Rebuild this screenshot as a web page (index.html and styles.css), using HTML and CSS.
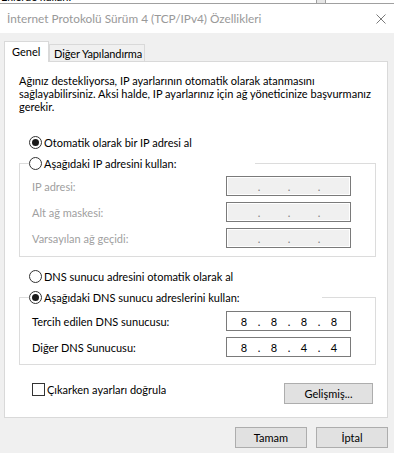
FILE: index.html
```html
<!DOCTYPE html>
<html lang="tr">
<head>
<meta charset="utf-8">
<title>İnternet Protokolü Sürüm 4 (TCP/IPv4) Özellikleri</title>
<link rel="stylesheet" href="styles.css">
</head>
<body>
<div class="behind"><span class="behind-text">Eklerde kullan:</span><span class="behind-scroll"></span></div>
<div class="window">
  <div class="titlebar">
    <span class="title">İnternet Protokolü Sürüm 4 (TCP/IPv4) Özellikleri</span>
    <svg class="close" viewBox="0 0 10 10" width="10" height="10"><path d="M0.5 0.5L9.5 9.5M9.5 0.5L0.5 9.5" stroke="#7a7a7a" stroke-width="1" fill="none"/></svg>
  </div>
  <div class="dialog-body">
    <div class="tabs">
      <div class="tab tab-active">Genel</div>
      <div class="tab">Diğer Yapılandırma</div>
    </div>
    <div class="panel">
      <p class="intro">Ağınız destekliyorsa, IP ayarlarının otomatik olarak atanmasını<br>sağlayabilirsiniz. Aksi halde, IP ayarlarınız için ağ yöneticinize başvurmanız<br>gerekir.</p>
      <div class="option option-ip-auto"><span class="radio radio-checked"></span><span>Otomatik olarak bir IP adresi al</span></div>
      <fieldset class="group">
        <legend class="group-legend legend-ip"><span class="option"><span class="radio"></span><span>Aşağıdaki IP adresini kullan:</span></span></legend>
        <div class="field-row disabled"><span>IP adresi:</span><div class="ip-field"><span class="oct"></span><span class="dot">.</span><span class="oct"></span><span class="dot">.</span><span class="oct"></span><span class="dot">.</span><span class="oct"></span></div></div>
        <div class="field-row disabled"><span>Alt ağ maskesi:</span><div class="ip-field"><span class="oct"></span><span class="dot">.</span><span class="oct"></span><span class="dot">.</span><span class="oct"></span><span class="dot">.</span><span class="oct"></span></div></div>
        <div class="field-row disabled"><span>Varsayılan ağ geçidi:</span><div class="ip-field"><span class="oct"></span><span class="dot">.</span><span class="oct"></span><span class="dot">.</span><span class="oct"></span><span class="dot">.</span><span class="oct"></span></div></div>
      </fieldset>
      <div class="option option-dns-auto"><span class="radio"></span><span>DNS sunucu adresini otomatik olarak al</span></div>
      <fieldset class="group group-dns">
        <legend class="group-legend legend-dns"><span class="option"><span class="radio radio-checked"></span><span>Aşağıdaki DNS sunucu adreslerini kullan:</span></span></legend>
        <div class="field-row"><span>Tercih edilen DNS sunucusu:</span><div class="ip-field"><span class="oct">8</span><span class="dot">.</span><span class="oct">8</span><span class="dot">.</span><span class="oct">8</span><span class="dot">.</span><span class="oct">8</span></div></div>
        <div class="field-row"><span>Diğer DNS Sunucusu:</span><div class="ip-field"><span class="oct">8</span><span class="dot">.</span><span class="oct">8</span><span class="dot">.</span><span class="oct">4</span><span class="dot">.</span><span class="oct">4</span></div></div>
      </fieldset>
      <div class="check-row">
        <label class="check"><span class="checkbox"></span><span>Çıkarken ayarları doğrula</span></label>
        <button class="btn btn-advanced" type="button">Gelişmiş...</button>
      </div>
    </div>
    <div class="dialog-buttons">
      <button class="btn btn-dialog" type="button">Tamam</button>
      <button class="btn btn-dialog" type="button">İptal</button>
    </div>
  </div>
</div>
</body>
</html>
```

FILE: styles.css
```css
* { box-sizing: border-box; }

body {
  margin: 0;
  width: 394px;
  height: 453px;
  overflow: hidden;
  background: #fff;
  color: #000;
  font-family: Lato, "Liberation Sans", sans-serif;
  font-size: 11px;
}

.behind {
  display: flex;
  height: 4px;
  overflow: hidden;
  border-bottom: 1px solid #a0a0a0;
}
.behind-text {
  line-height: 12px;
  margin-top: -9px;
  padding-left: 1px;
}
.behind-scroll {
  width: 10px;
  margin-left: auto;
  margin-right: 68px;
  background: #e6e6e6;
  border-left: 1px solid #a0a0a0;
  border-right: 1px solid #a0a0a0;
}

.titlebar {
  display: flex;
  align-items: center;
  height: 29px;
  padding: 0 8px 0 7px;
  background: #fff;
}
.title {
  color: #999;
  font-size: 11.8px;
  white-space: nowrap;
}
.close {
  margin-left: auto;
  display: block;
}

.dialog-body {
  height: 420px;
  padding-top: 8px;
  background: #f0f0f0;
}

.tabs {
  display: flex;
  align-items: flex-end;
  height: 20px;
  margin-left: 4px;
}
.tab {
  position: relative;
  height: 17px;
  width: 96px;
  padding: 1px 0 0 4px;
  border: 1px solid #d9d9d9;
  border-bottom: none;
  background: #f0f0f0;
  line-height: 15px;
  white-space: nowrap;
  letter-spacing: -0.1px;
}
.tab-active {
  z-index: 1;
  width: 45px;
  height: 21px;
  margin-bottom: -1px;
  padding: 2px 0 0 7px;
  background: #fff;
  letter-spacing: 0;
}

.panel {
  width: 384px;
  height: 357px;
  margin-left: 4px;
  padding: 12px 11px 0 14px;
  background: #fff;
  border: 1px solid #d9d9d9;
}

.intro {
  margin: 0;
  line-height: 13px;
  white-space: nowrap;
}

.option {
  display: flex;
  align-items: center;
  gap: 2px;
  height: 21px;
  white-space: nowrap;
}
.option-ip-auto {
  margin: 19px 0 0 10px;
}
.option-dns-auto {
  margin: 9px 0 0 10px;
}

.radio {
  flex: none;
  display: grid;
  place-items: center;
  width: 13px;
  height: 13px;
  border: 1px solid #333;
  border-radius: 50%;
  background: #fff;
}
.radio-checked::after {
  content: "";
  width: 7px;
  height: 7px;
  border-radius: 50%;
  background: #1a1a1a;
}

.group {
  width: 357px;
  margin: 0;
  padding: 2px 24px 8px 12px;
  border: 1px solid #dcdcdc;
}
.group-dns {
  padding-top: 3px;
  padding-bottom: 7px;
}
.group-legend {
  padding: 0;
  margin-left: -3px;
  height: 21px;
}
.legend-ip { width: 226px; }
.legend-dns { width: 293px; }

.field-row {
  display: flex;
  align-items: center;
  justify-content: space-between;
  height: 20px;
}
.field-row + .field-row {
  margin-top: 6px;
}
.disabled {
  color: #a0a0a0;
}

.ip-field {
  display: flex;
  align-items: center;
  width: 125px;
  height: 20px;
  padding-left: 4px;
  border: 1px solid #7a7a7a;
  background: #fff;
  color: #000;
}
.disabled .ip-field {
  background: #f0f0f0;
  box-shadow: inset 0 0 0 1px #fff;
  color: #808080;
}
.oct {
  width: 26px;
  text-align: center;
}
.dot {
  width: 4px;
  text-align: center;
}

.check-row {
  display: flex;
  align-items: flex-start;
  justify-content: space-between;
  width: 357px;
  margin-top: 18px;
}
.check {
  display: flex;
  align-items: center;
  gap: 2px;
  margin-left: 13px;
  line-height: 13px;
}
.checkbox {
  width: 13px;
  height: 13px;
  border: 1px solid #333;
  background: #fff;
}

.btn {
  height: 21px;
  padding: 0;
  font: inherit;
  color: #000;
  background: #e1e1e1;
  border: 1px solid #adadad;
}
.btn-advanced {
  width: 89px;
  margin-right: 3px;
}

.dialog-buttons {
  display: flex;
  justify-content: flex-end;
  gap: 9px;
  margin-top: 9px;
  padding-right: 6px;
}
.btn-dialog {
  width: 72px;
}
```
